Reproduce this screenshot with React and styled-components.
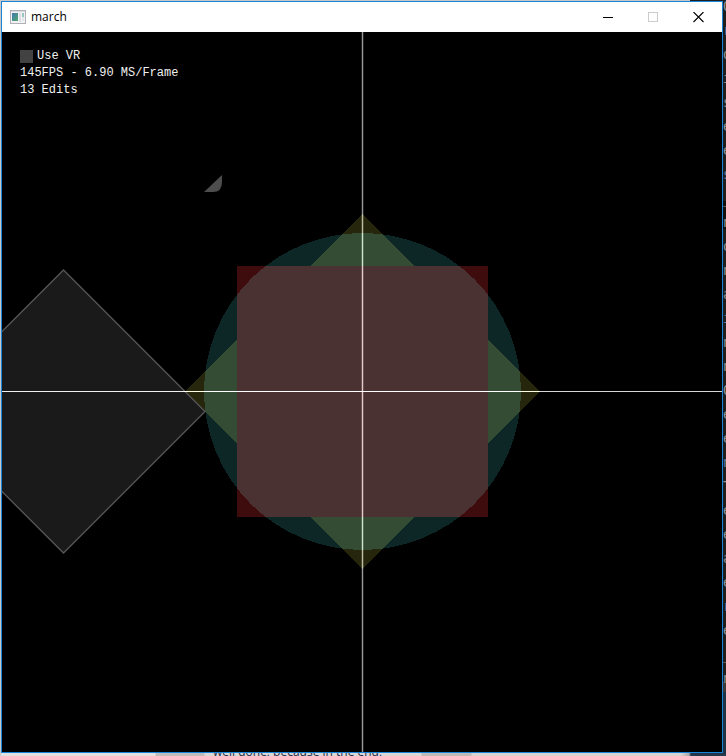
import React from "react";
import styled, { createGlobalStyle } from "styled-components";

const GlobalStyle = createGlobalStyle`
  * { box-sizing: border-box; }
  body { margin: 0; overflow: hidden; background: #cccccc; }
`;

const Desktop = styled.div`
  display: grid;
  grid-template-columns: minmax(0, 1fr) 3px;
  grid-template-rows: minmax(0, 1fr) 3px;
  width: 100%;
  height: 100vh;
  padding: 1px 0 0 1px;
  background: linear-gradient(to right, #c8c8c8 95%, #1e1e1e 95%);
`;

const AppWindow = styled.main`
  display: flex;
  flex-direction: column;
  border: 1px solid #1883d7;
  background: #000000;
`;

const TitleBar = styled.header`
  display: flex;
  flex: none;
  align-items: center;
  height: 30px;
  padding: 0 1px 0 8px;
  background: #ffffff;
`;

const AppIcon = styled.svg`
  display: block;
  width: 16px;
  height: 14px;
`;

const Title = styled.h1`
  flex: 1;
  margin: 0 0 0 5px;
  color: #000000;
  font: 400 12px/16px "Open Sans", "Noto Sans", sans-serif;
`;

const WindowButton = styled.button`
  display: grid;
  place-items: center;
  width: 45px;
  height: 30px;
  padding: 0;
  border: 0;
  background: transparent;
  color: ${({ disabled }) => (disabled ? "#cccccc" : "#000000")};

  svg { display: block; width: 11px; height: 11px; }
`;

const Viewport = styled.section`
  position: relative;
  flex: 1;
  min-height: 0;
  overflow: hidden;
`;

const Scene = styled.svg`
  display: block;
  width: 100%;
  height: 100%;
  isolation: isolate;
`;

const Added = styled.g`
  mix-blend-mode: plus-lighter;
`;

const Overlay = styled.div`
  position: absolute;
  top: 16px;
  left: 18px;
  color: #f0f0f0;
  font: 400 12px/17px "Liberation Mono", monospace;
  white-space: pre;
`;

const CheckLabel = styled.label`
  display: flex;
  align-items: center;
  gap: 4px;
`;

const CheckBox = styled.input`
  appearance: none;
  width: 13px;
  height: 13px;
  margin: 0;
  background: #424242;

  &:checked { box-shadow: inset 0 0 0 3px #424242; background: #dddddd; }
`;

const OverlayLine = styled.p`
  margin: 0;
`;

const EditorStrip = styled.aside`
  overflow: hidden;
  padding-top: 7px;
  background: linear-gradient(to bottom, #1e1e1e 0 200px, #101010 200px 228px, #1e1e1e 228px 681px, #3a3a3a 681px 691px, #1f3347 691px);
  color: #8c9196;
  font: 400 14px/24px "DejaVu Sans Mono", monospace;
`;

const EditorLine = styled.div`
  height: 24px;
  margin-top: ${({ $first }) => ($first ? "-14px" : "0")};
  color: ${({ $accent }) => ($accent ? "#5b7fa8" : "inherit")};
  white-space: pre;
`;

const PageStrip = styled.footer`
  display: flex;
  grid-column: 1 / -1;
  align-items: flex-end;
  overflow: hidden;
  padding-left: 203px;
  background: linear-gradient(to right, #e2e2e2 0 154px, #bdbdbd 155px 203px, #d8d8d8 204px 420px, #bbbbbb 421px 470px, #d4d4d4 471px 680px, #aaaaaa 688px, #24364a 690px);
`;

const PageText = styled.span`
  padding-left: 9px;
  color: #252d48;
  font: 400 12px/8px "Open Sans", "Noto Sans", sans-serif;
  white-space: nowrap;
`;

const editorGlyphs = "Ordisees_nonainnOeenTeeaere_n".split("");

export default function App() {
  return (
    <>
      <GlobalStyle />
      <Desktop>
        <AppWindow>
          <TitleBar>
            <AppIcon viewBox="0 0 16 14" shapeRendering="crispEdges" aria-hidden="true">
              <defs>
                <linearGradient id="pane" x1="0" y1="0" x2="1" y2="1">
                  <stop offset="0" stopColor="#4478b4" />
                  <stop offset="1" stopColor="#4fa86a" />
                </linearGradient>
              </defs>
              <rect width="16" height="14" fill="#b0b0b8" />
              <rect x="1" y="1" width="14" height="1" fill="#d8d8df" />
              <rect x="1" y="2" width="14" height="11" fill="#f2f2f4" />
              <rect x="2" y="3" width="6" height="8" fill="url(#pane)" />
              <rect x="9" y="3" width="2" height="9" fill="#dddde2" />
              <rect x="12" y="3" width="2" height="4" fill="#9cc4c0" />
              <rect x="12" y="7" width="2" height="4" fill="#e1e6e6" />
            </AppIcon>
            <Title>march</Title>
            <WindowButton aria-label="Minimize">
              <svg viewBox="0 0 11 11" shapeRendering="crispEdges">
                <rect y="5" width="10" height="1" fill="currentColor" />
              </svg>
            </WindowButton>
            <WindowButton aria-label="Maximize" disabled>
              <svg viewBox="0 0 11 11" shapeRendering="crispEdges">
                <rect x="0.5" y="0.5" width="9" height="9" fill="none" stroke="currentColor" />
              </svg>
            </WindowButton>
            <WindowButton aria-label="Close">
              <svg viewBox="0 0 11 11">
                <path d="M0.5 0 10.5 10M10.5 0 0.5 10" fill="none" stroke="currentColor" strokeWidth="1.1" />
              </svg>
            </WindowButton>
          </TitleBar>

          <Viewport>
            <Scene viewBox="0 0 720 720" preserveAspectRatio="xMidYMid slice" role="img" aria-label="Shape preview">
              <rect width="720" height="720" fill="#000000" />
              <g shapeRendering="crispEdges">
                <circle cx="360.5" cy="359.5" r="158.5" fill="#0d2626" />
                <Added>
                  <rect x="235" y="234" width="251" height="251" fill="#3e0c0c" />
                </Added>
                <Added>
                  <path
                    d="M360.5 182 412.5 234H308.5ZM360.5 537 412.5 485H308.5ZM183 359.5 235 307.5V411.5ZM538 359.5 486 307.5V411.5Z"
                    fill="#26260d"
                  />
                </Added>
              </g>
              <path d="M61.5 238 203 379.5 61.5 521-80 379.5Z" fill="#1a1a1a" stroke="#555555" strokeWidth="1.4" />
              <path d="M220 143V150Q220 160 211 160H202Z" fill="#4d4d4d" />
              <Added shapeRendering="crispEdges">
                <rect x="360" width="1" height="720" fill="#999999" />
                <rect x="359" width="1" height="720" fill="#222222" />
                <rect x="361" width="1" height="720" fill="#222222" />
                <rect y="359" width="720" height="1" fill="#d5d5d5" />
              </Added>
            </Scene>
            <Overlay>
              <CheckLabel htmlFor="use-vr">
                <CheckBox id="use-vr" type="checkbox" />
                Use VR
              </CheckLabel>
              <OverlayLine>145FPS - 6.90 MS/Frame</OverlayLine>
              <OverlayLine>13 Edits</OverlayLine>
            </Overlay>
          </Viewport>
        </AppWindow>

        <EditorStrip>
          {editorGlyphs.map((glyph, index) => (
            <EditorLine key={index} $first={index === 0} $accent={index % 6 === 1}>
              {glyph}
            </EditorLine>
          ))}
        </EditorStrip>
        <PageStrip>
          <PageText>well done, because in the end,</PageText>
        </PageStrip>
      </Desktop>
    </>
  );
}
